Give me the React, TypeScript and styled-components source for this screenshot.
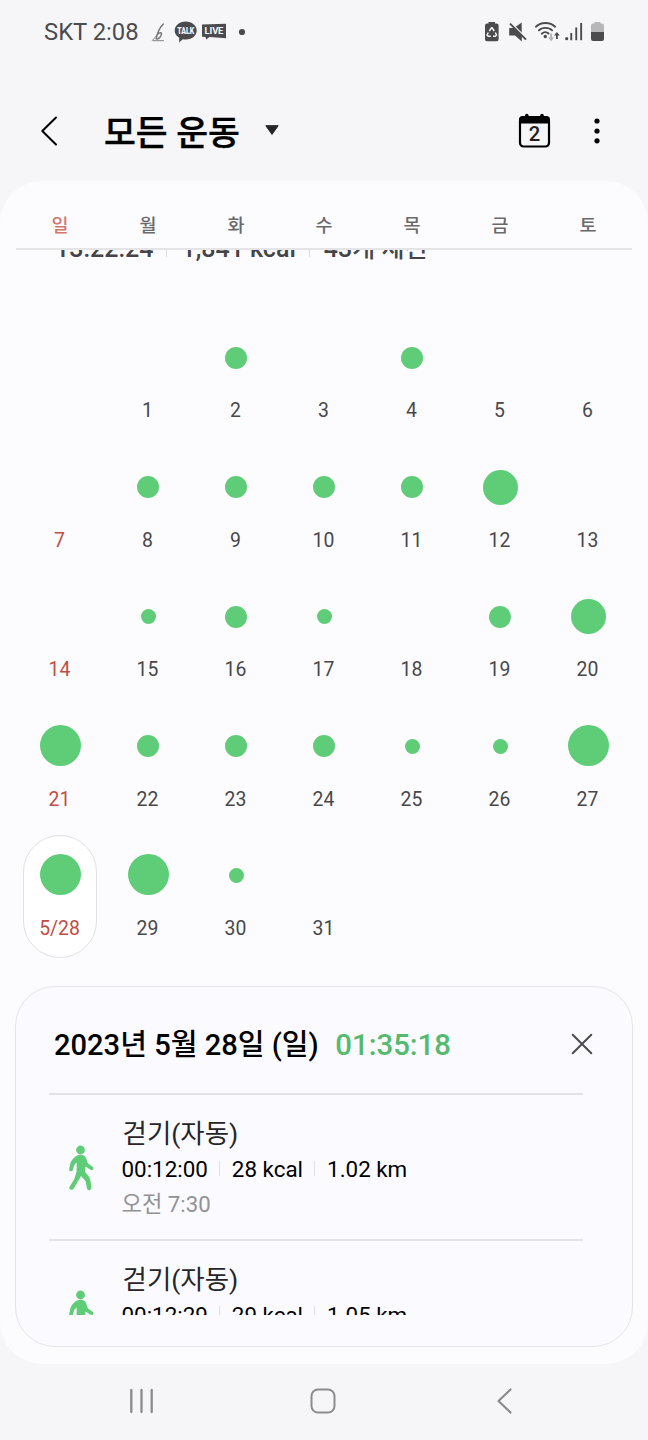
import React from "react";
import styled, { createGlobalStyle } from "styled-components";

const GlobalStyle = createGlobalStyle`
  * { box-sizing: border-box; }
  body { margin: 0; background: #f6f6f8; }
  svg { display: block; flex: none; }
  button { all: unset; display: flex; flex: none; }
`;

const Screen = styled.div`
  width: 648px;
  height: 1440px;
  display: flex;
  flex-direction: column;
  background: #f6f6f8;
  overflow: hidden;
  font-family: Roboto, "Noto Sans CJK KR", sans-serif;
`;

const StatusBar = styled.div`
  height: 64px;
  padding: 0 43px 0 44px;
  display: flex;
  align-items: center;
  justify-content: space-between;
  color: #4b4b4d;
`;

const StatusGroup = styled.div`
  display: flex;
  align-items: center;
`;

const Clock = styled.span`
  width: 106px;
  font-size: 23.8px;
  line-height: 28px;
  white-space: nowrap;
`;

const Header = styled.header`
  height: 117px;
  padding: 16px 47px 0 40px;
  display: flex;
  align-items: center;
`;

const Title = styled.h1`
  margin: 0 0 0 44px;
  padding-top: 4px;
  width: 160.5px;
  font-size: 34.6px;
  line-height: 50px;
  font-weight: 500;
  -webkit-text-stroke: 0.4px #000;
  color: #000;
  white-space: nowrap;
`;

const HeaderActions = styled.div`
  margin-left: auto;
  display: flex;
  align-items: center;
  gap: 41px;
`;

const Panel = styled.main`
  height: 1183px;
  padding: 0 16px;
  display: flex;
  flex-direction: column;
  border-radius: 42px;
  background: #fcfcfe;
`;

const WeekHeader = styled.div`
  height: 69px;
  flex: none;
  padding-top: 32px;
  display: grid;
  grid-template-columns: repeat(7, 1fr);
  border-bottom: 2px solid #e4e4e6;
`;

const WeekDay = styled.span<{ $sunday?: boolean }>`
  font-size: 18.5px;
  line-height: 26px;
  font-weight: 500;
  text-align: center;
  color: ${(p) => (p.$sunday ? "#d4766d" : "#69696c")};
`;

const CalendarScroll = styled.div`
  height: 736px;
  flex: none;
  overflow: hidden;
`;

const Summary = styled.div`
  height: 32px;
  margin: -17px 0 52px;
  padding-left: 39px;
  display: flex;
  align-items: center;
  font-size: 25px;
  line-height: 32px;
  font-weight: 500;
  color: #454547;
  white-space: nowrap;
`;

const SummaryDivider = styled.i`
  width: 1px;
  height: 16px;
  margin: 0 14px 0 13px;
  background: #dcdce0;
`;

const Week = styled.div`
  height: 129.5px;
  display: grid;
  grid-template-columns: repeat(7, 1fr);
  justify-items: center;
`;

const Day = styled.div<{ $selected?: boolean }>`
  width: 74px;
  height: 123px;
  display: flex;
  flex-direction: column;
  align-items: center;
  border: 1px solid ${(p) => (p.$selected ? "#e0e0e2" : "transparent")};
  border-radius: 37px;
  background: ${(p) => (p.$selected ? "#fff" : "transparent")};
`;

const DotSlot = styled.div`
  height: 79px;
  display: flex;
  align-items: center;
`;

const Dot = styled.div<{ $size: number }>`
  width: ${(p) => p.$size}px;
  height: ${(p) => p.$size}px;
  margin-bottom: ${(p) => (p.$size > 40 ? 2 : 0)}px;
  border-radius: 50%;
  background: #5fcd78;
`;

const DayNumber = styled.span<{ $sunday?: boolean }>`
  padding-right: 1px;
  font-size: 19.4px;
  line-height: 28px;
  color: ${(p) => (p.$sunday ? "#bf4d43" : "#48484a")};
`;

const DetailCard = styled.section`
  height: 361px;
  flex: none;
  margin: 0 -1px;
  padding: 0 49px 31px 33px;
  display: flex;
  flex-direction: column;
  border: 1px solid #e4e4e9;
  border-radius: 40px;
  background: #fbfbff;
`;

const DetailHeader = styled.div`
  height: 106px;
  flex: none;
  padding: 8px 0 0 5px;
  display: flex;
  align-items: center;
  justify-content: space-between;
  button { margin-right: -11px; }
`;

const DetailTitle = styled.h2`
  margin: 0;
  padding-top: 2px;
  display: flex;
  align-items: baseline;
  font-size: 29.1px;
  line-height: 40px;
  font-weight: 500;
  color: #000;
  white-space: nowrap;
`;

const TotalTime = styled.span`
  margin-left: 16.5px;
  font-size: 29.4px;
  color: #55ba70;
`;

const Sessions = styled.div`
  height: 222px;
  overflow: hidden;
`;

const Session = styled.article`
  height: 145.5px;
  padding-left: 14px;
  display: flex;
  border-top: 2px solid #e2e2e7;
  svg { margin-top: 49.5px; }
`;

const SessionText = styled.div`
  margin-left: 24.5px;
  padding-top: 20px;
  display: flex;
  flex-direction: column;
  white-space: nowrap;
`;

const SessionName = styled.span`
  padding-left: 1px;
  font-size: 26.5px;
  line-height: 37px;
  color: #262628;
`;

const Metrics = styled.div`
  display: flex;
  align-items: center;
  font-size: 22.4px;
  line-height: 35px;
  color: #000;
`;

const MetricDivider = styled.i`
  width: 1px;
  height: 15px;
  margin: 0 12px 3px 11px;
  background: #e0e0e6;
`;

const StartTime = styled.span`
  font-size: 22.2px;
  line-height: 35px;
  color: #929296;
`;

const NavBar = styled.nav`
  height: 76px;
  padding: 0 134px 2px 128px;
  display: flex;
  align-items: center;
  justify-content: space-between;
`;

const HomeButton = styled.button`
  padding-right: 4px;
`;

const WEEKDAYS = ["일", "월", "화", "수", "목", "금", "토"];
const S = 15;
const M = 22;
const L = 35;
const XL = 41;

type DayData = { label?: string; size?: number; selected?: boolean };

const WEEKS: DayData[][] = [
  [{}, { label: "1" }, { label: "2", size: M }, { label: "3" }, { label: "4", size: M }, { label: "5" }, { label: "6" }],
  [{ label: "7" }, { label: "8", size: M }, { label: "9", size: M }, { label: "10", size: M }, { label: "11", size: M }, { label: "12", size: L }, { label: "13" }],
  [{ label: "14" }, { label: "15", size: S }, { label: "16", size: M }, { label: "17", size: S }, { label: "18" }, { label: "19", size: M }, { label: "20", size: L }],
  [{ label: "21", size: XL }, { label: "22", size: M }, { label: "23", size: M }, { label: "24", size: M }, { label: "25", size: S }, { label: "26", size: S }, { label: "27", size: XL }],
  [{ label: "5/28", size: XL, selected: true }, { label: "29", size: XL }, { label: "30", size: S }, { label: "31" }, {}, {}, {}],
];

const SESSIONS = [
  { name: "걷기(자동)", metrics: ["00:12:00", "28 kcal", "1.02 km"], start: "오전 7:30" },
  { name: "걷기(자동)", metrics: ["00:12:29", "29 kcal", "1.05 km"] },
];

const NotificationIcons = () => (
  <svg width="100" height="28" viewBox="150 18 100 28">
    <g fill="none" stroke="#77777a" strokeLinecap="round">
      <path d="M163.3 24 C160 27.500 157 34 156.200 38.600 C158 40 161.300 37 161.500 33.800 C161.500 32.200 159.400 32.200 157.600 34.200" strokeWidth="1.500" />
      <path d="M152.500 40.300 C154 38.500 156 36.500 157.600 34.600" strokeWidth="0.900" />
      <path d="M153 40.700 H163.500" strokeWidth="0.900" />
    </g>
    <path d="M185.700 21.600c6.200 0 11 4 11 9s-4.800 9-10.600 9c-1.200 0-2.300-.1-3.300-.4l-3.600 3.200v-4.600c-2.800-1.600-4.500-4.200-4.500-7.200 0-5 4.800-9 11-9z" fill="#4b4b4d" />
    <text x="185.700" y="34" fontSize="8.600" fontWeight="900" fontFamily="Roboto, sans-serif" fill="#f6f6f8" textAnchor="middle" textLength="17" lengthAdjust="spacingAndGlyphs">TALK</text>
    <path d="M202 24.500 L226 23.700 V38.200 L209.500 37 L206.300 39.500 L205.500 36.900 L202 36.700Z" fill="#4b4b4d" />
    <text x="214" y="34.100" fontSize="9.400" fontWeight="700" fontFamily="Roboto, sans-serif" fill="#f6f6f8" textAnchor="middle" textLength="18.800">LIVE</text>
    <circle cx="242" cy="32" r="3.100" fill="#4b4b4d" />
  </svg>
);

const SystemIcons = () => (
  <svg width="121" height="28" viewBox="484 18 121 28">
    <g fill="#4b4b4d">
      <path d="M488.500 22 h6.500 v1.500 h1.600 a2 2 0 0 1 2 2 v13.700 a2 2 0 0 1 -2 2 h-9.600 a2 2 0 0 1 -2 -2 v-13.700 a2 2 0 0 1 2 -2 h1.500z" />
      <g fill="none" stroke="#f6f6f8" strokeWidth="1.500" strokeLinejoin="round">
        <path d="M489.300 31 l2.500 -3.500 2.500 3.500" />
        <path d="M495.300 32.500 l1.300 2.500 -1.300 1.300 h-2.300" />
        <path d="M490.800 36.300 h-2.600 l-1.200 -1.300 1.300 -2.500" />
      </g>
      <path d="M509.200 28 h5.200 l7.400 7.500 v6 l-6.800 -6 h-5.800z" />
      <path d="M515.700 26.800 l6 -4.300 v10.300z" />
      <path d="M511.400 23.300 l15.400 15.700" stroke="#f6f6f8" strokeWidth="1.400" />
      <path d="M510 23.700 l16 16" stroke="#4b4b4d" strokeWidth="1.900" />
      <circle cx="545.300" cy="36.500" r="1.700" />
      <g fill="none" stroke="#4b4b4d" strokeWidth="1.900" strokeLinecap="round">
        <path d="M535.900 26.700 C541 21.800 550 21.800 555.100 26.700" />
        <path d="M538.900 30.300 C542 27 549 27 552.100 30.300" />
        <path d="M541.800 33.700 C543.800 31.800 546.800 31.800 548.600 33.500" />
      </g>
      <path d="M550.100 33.500 h2 v4 h2 l-3 3.700 -3 -3.700 h2z" fill="#b4b4b6" />
      <path d="M556 39 v-3.600 h-2 l2.900 -3.500 2.900 3.500 h-2 v3.600z" />
      <circle cx="566.700" cy="38.700" r="1.600" />
      <path d="M570.300 33 h1.900 v7.300 h-1.900z M575.300 27.500 h1.900 v12.800 h-1.900z M580.200 23 h1.900 v17.300 h-1.900z" />
      <path d="M594.500 22 h6 v1.600 h1.500 a2 2 0 0 1 2 2 v6.400 h-13 v-6.400 a2 2 0 0 1 2 -2 h1.500z" fill="#b7b7b9" />
      <path d="M591 32 h13 v7 a2 2 0 0 1 -2 2 h-9 a2 2 0 0 1 -2 -2z" />
    </g>
  </svg>
);

const BackIcon = () => (
  <svg width="20" height="32" viewBox="0 0 20 32" fill="none" stroke="#000" strokeWidth="2" strokeLinecap="round" strokeLinejoin="round">
    <path d="M16 2.500 L2.300 16 L16 29.500" />
  </svg>
);

const CalendarIcon = () => (
  <svg width="34" height="36" viewBox="0 0 34 36">
    <rect x="2" y="4.500" width="29" height="29" rx="3.500" fill="none" stroke="#000" strokeWidth="2.200" />
    <path d="M1 10.500 V6.500 a3.500 3.500 0 0 1 3.500 -3.500 h24 a3.500 3.500 0 0 1 3.500 3.500 V10.500z M7 4 v-1.500 a1.800 1.800 0 0 1 3.600 0 v1.500z M22.200 4 v-1.500 a1.800 1.800 0 0 1 3.600 0 v1.500z" fill="#000" />
    <text x="16.500" y="27.500" fontFamily="Roboto, sans-serif" fontSize="20.200" fontWeight="500" fill="#202022" textAnchor="middle">2</text>
  </svg>
);

const MoreIcon = () => (
  <svg width="8" height="28" viewBox="0 0 8 28">
    <circle cx="4" cy="4" r="2.600" />
    <circle cx="4" cy="14" r="2.600" />
    <circle cx="4" cy="23.800" r="2.600" />
  </svg>
);

const CloseIcon = () => (
  <svg width="24" height="24" viewBox="0 0 24 24" fill="none" stroke="#4c4c50" strokeWidth="2" strokeLinecap="round">
    <path d="M2.700 2.700 L21.300 21.300 M21.300 2.700 L2.700 21.300" />
  </svg>
);

const WalkIcon = () => (
  <svg width="34" height="46" viewBox="0 0 34 46" fill="#5fcd78">
    <circle cx="17.500" cy="5" r="4.400" />
    <path d="M17.500 9.800 C20 9.800 22 11 23 13 L24.800 18.200 L29.800 22 C31.300 23.400 29.900 25.800 28 25 L22.500 21.600 L22.200 27 L26.200 32 C27.400 34 28.100 39 28.400 42.800 C28.500 45.700 24.600 45.900 24 43.500 L22.500 36 L18 31 L14.600 37 L10.300 44 C8.600 45.900 5.400 44.200 6.400 42.100 L11.200 34.200 L13.500 27 L13.700 17.500 L11.200 20 L9.900 25 C9.200 27 5.800 26.700 6.100 24.500 L7.400 18.200 C9 14 13 9.900 17.500 9.800Z" />
  </svg>
);

export default function App() {
  return (
    <>
      <GlobalStyle />
      <Screen>
        <StatusBar>
          <StatusGroup>
            <Clock>SKT 2:08</Clock>
            <NotificationIcons />
          </StatusGroup>
          <SystemIcons />
        </StatusBar>

        <Header>
          <button aria-label="뒤로"><BackIcon /></button>
          <Title>모든 운동</Title>
          <svg width="14" height="11" viewBox="0 0 14 11">
            <path d="M0.800 0.700 H13.200 L7 9.400Z" fill="#252527" stroke="#252527" strokeWidth="1" strokeLinejoin="round" />
          </svg>
          <HeaderActions>
            <button aria-label="오늘"><CalendarIcon /></button>
            <button aria-label="더보기"><MoreIcon /></button>
          </HeaderActions>
        </Header>

        <Panel>
          <WeekHeader>
            {WEEKDAYS.map((d, i) => (
              <WeekDay key={d} $sunday={i === 0}>{d}</WeekDay>
            ))}
          </WeekHeader>
          <CalendarScroll>
            <Summary>
              <span>13:22:24</span>
              <SummaryDivider />
              <span>1,841 kcal</span>
              <SummaryDivider />
              <span>43개 세션</span>
            </Summary>
            {WEEKS.map((week, w) => (
              <Week key={w}>
                {week.map((day, i) => (
                  <Day key={i} $selected={day.selected}>
                    <DotSlot>{day.size && <Dot $size={day.size} />}</DotSlot>
                    <DayNumber $sunday={i === 0}>{day.label}</DayNumber>
                  </Day>
                ))}
              </Week>
            ))}
          </CalendarScroll>

          <DetailCard>
            <DetailHeader>
              <DetailTitle>
                <span>2023년 5월 28일 (일)</span>
                <TotalTime>01:35:18</TotalTime>
              </DetailTitle>
              <button aria-label="닫기"><CloseIcon /></button>
            </DetailHeader>
            <Sessions>
              {SESSIONS.map((s) => (
                <Session key={s.metrics[0]}>
                  <WalkIcon />
                  <SessionText>
                    <SessionName>{s.name}</SessionName>
                    <Metrics>
                      {s.metrics.map((m, i) => (
                        <React.Fragment key={m}>
                          {i > 0 && <MetricDivider />}
                          <span>{m}</span>
                        </React.Fragment>
                      ))}
                    </Metrics>
                    {s.start && <StartTime>{s.start}</StartTime>}
                  </SessionText>
                </Session>
              ))}
            </Sessions>
          </DetailCard>
        </Panel>

        <NavBar>
          <button aria-label="최근 앱">
            <svg width="26" height="26" viewBox="0 0 26 26" stroke="#8b8b8d" strokeWidth="2.300" strokeLinecap="round">
              <path d="M3.300 2 V24 M13.500 2 V24 M23.700 2 V24" />
            </svg>
          </button>
          <HomeButton aria-label="홈">
            <svg width="26" height="26" viewBox="0 0 26 26" fill="none" stroke="#8b8b8d" strokeWidth="2">
              <rect x="1.500" y="1.500" width="23" height="23" rx="6.500" />
            </svg>
          </HomeButton>
          <button aria-label="이전">
            <svg width="18" height="28" viewBox="0 0 18 28" fill="none" stroke="#8b8b8d" strokeWidth="2.200" strokeLinecap="round" strokeLinejoin="round">
              <path d="M14.500 2.500 L2.500 14 L14.500 25.500" />
            </svg>
          </button>
        </NavBar>
      </Screen>
    </>
  );
}
